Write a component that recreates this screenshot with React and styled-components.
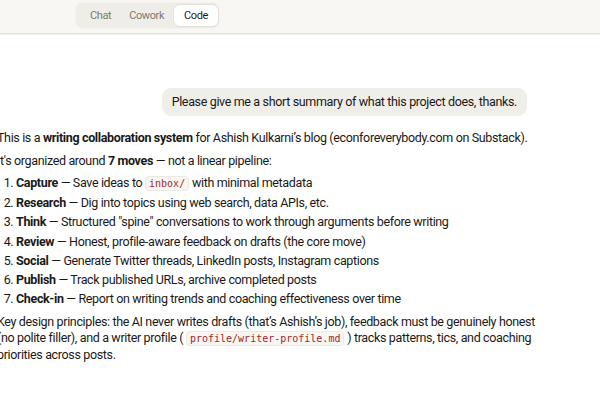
import React from 'react';
import styled, { createGlobalStyle } from 'styled-components';

const GlobalStyle = createGlobalStyle`
  html, body {
    margin: 0;
    padding: 0;
    background: #ffffff;
    overflow: hidden;
  }
  body {
    font-family: Roboto, "Noto Sans", sans-serif;
    color: #1a1918;
    -webkit-font-smoothing: antialiased;
  }
`;

const Page = styled.div`
  width: 600px;
  height: 400px;
  background: #ffffff;
  overflow: hidden;
`;

const TopBar = styled.header`
  height: 34px;
  background: #f8f7f4;
  border-bottom: 1px solid #e4e2dc;
  box-shadow: 0 1px 0 #f1f0ec;
  display: flex;
  align-items: flex-start;
  padding: 2px 0 0 75px;
  box-sizing: border-box;
`;

const Segmented = styled.nav`
  display: flex;
  align-items: center;
  height: 27px;
  padding: 0 0 0 5px;
  background: #efede7;
  border: 1px solid #f4f3ef;
  border-radius: 8px;
  box-sizing: border-box;
`;

const Tab = styled.button`
  font-family: inherit;
  font-size: 11px;
  letter-spacing: -0.4px;
  height: 23px;
  padding: 0 ${(p) => (p.$active ? '10px' : '8px')};
  border-radius: 7px;
  border: 1px solid ${(p) => (p.$active ? '#e3e0d8' : 'transparent')};
  background: ${(p) => (p.$active ? '#ffffff' : 'transparent')};
  color: ${(p) => (p.$active ? '#1f1e1d' : '#7d7a72')};
  cursor: pointer;
`;

const Thread = styled.main`
  width: 556px;
  margin-left: -3px;
  padding-top: 54px;
  font-size: 12.5px;
  letter-spacing: -0.35px;
  line-height: 16px;
`;

const UserRow = styled.div`
  display: flex;
  justify-content: flex-end;
  padding-right: 26px;
  margin-bottom: 14px;
`;

const Bubble = styled.div`
  background: #f0eee8;
  border-radius: 9px;
  padding: 6px 10px;
  line-height: 16px;
`;

const Para = styled.p`
  margin: 0 0 7px;
`;

const Steps = styled.ol`
  margin: -1px 0 7px;
  padding-left: 19px;
`;

const Step = styled.li`
  margin-bottom: 3.2px;
`;

const Code = styled.code`
  font-family: "DejaVu Sans Mono", "Liberation Mono", monospace;
  font-size: 10px;
  letter-spacing: 0;
  color: #a3272c;
  background: #f7f6f2;
  border: 1px solid #ebe9e3;
  border-radius: 4px;
  padding: 1px 3px;
`;

const steps = [
  ['Capture', <>Save ideas to <Code>inbox/</Code> with minimal metadata</>],
  ['Research', 'Dig into topics using web search, data APIs, etc.'],
  ['Think', 'Structured "spine" conversations to work through arguments before writing'],
  ['Review', 'Honest, profile-aware feedback on drafts (the core move)'],
  ['Social', 'Generate Twitter threads, LinkedIn posts, Instagram captions'],
  ['Publish', 'Track published URLs, archive completed posts'],
  ['Check-in', 'Report on writing trends and coaching effectiveness over time'],
];

export default function App() {
  return (
    <Page>
      <GlobalStyle />
      <TopBar>
        <Segmented>
          <Tab>Chat</Tab>
          <Tab>Cowork</Tab>
          <Tab $active>Code</Tab>
        </Segmented>
      </TopBar>
      <Thread>
        <UserRow>
          <Bubble>Please give me a short summary of what this project does, thanks.</Bubble>
        </UserRow>
        <Para>
          This is a <strong>writing collaboration system</strong> for Ashish Kulkarni’s blog (econforeverybody.com on Substack).
        </Para>
        <Para>
          It's organized around <strong>7 moves</strong> — not a linear pipeline:
        </Para>
        <Steps>
          {steps.map(([name, text]) => (
            <Step key={name}>
              <strong>{name}</strong> — {text}
            </Step>
          ))}
        </Steps>
        <Para>
          Key design principles: the AI never writes drafts (that’s Ashish’s job), feedback must be genuinely honest (no polite filler), and a writer profile ( <Code>profile/writer-profile.md</Code> ) tracks patterns, tics, and coaching priorities across posts.
        </Para>
      </Thread>
    </Page>
  );
}
